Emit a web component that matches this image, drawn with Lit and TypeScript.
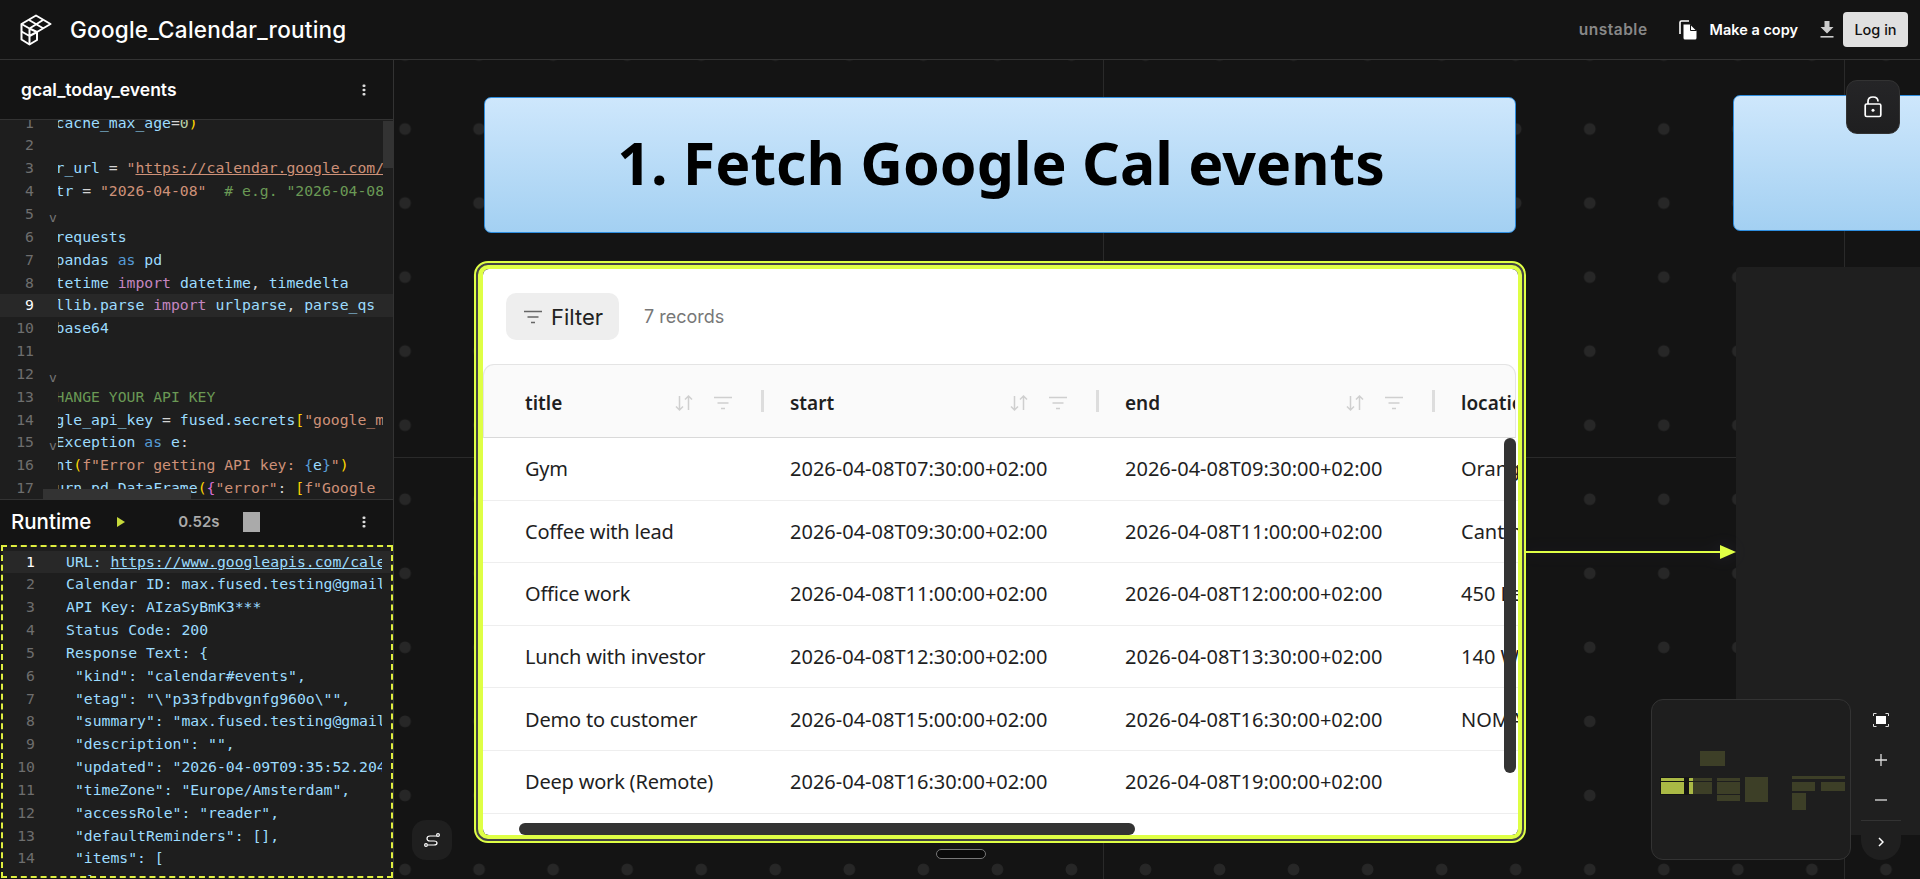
import { LitElement, css, html } from "lit";
import { customElement } from "lit/decorators.js";

const kebab = html`<svg class="kebab" width="4" height="12" viewBox="0 0 4 12" fill="currentColor">
    <rect x="0.5" y="0.5" width="3" height="2.4" rx="1"></rect>
    <rect x="0.5" y="4.8" width="3" height="2.4" rx="1"></rect>
    <rect x="0.5" y="9.1" width="3" height="2.4" rx="1"></rect>
</svg>`;

const filterIcon = (size: number) => html`<svg width=${size} height=${size} viewBox="0 0 18 18" fill="none" stroke="currentColor" stroke-width="1.5">
    <path d="M0 3.5H18M3.5 9H14.5M7 14.5H11"></path>
</svg>`;

const sortIcon = html`<svg width="18" height="18" viewBox="0 0 18 18" fill="none" stroke="currentColor" stroke-width="1.5">
    <path d="M4.5 2V16M1 12.5L4.5 16L8 12.5M13.5 16V2M10 5.5L13.5 2L17 5.5"></path>
</svg>`;

// syntax helpers for the editor lines
const v = (t: string) => html`<span class="v">${t}</span>`;
const k = (t: string) => html`<span class="k">${t}</span>`;
const b = (t: string) => html`<span class="b">${t}</span>`;
const s = (t: string) => html`<span class="s">${t}</span>`;
const c = (t: string) => html`<span class="c">${t}</span>`;
const n = (t: string) => html`<span class="n">${t}</span>`;
const y = (t: string) => html`<span class="y">${t}</span>`;

const codeLines = [
    html`${v("cache_max_age")}=${n("0")}${y(")")}`,
    html``,
    html`${v("r_url")} = ${s('"')}<span class="s u">https://calendar.google.com/calendar/ical</span>`,
    html`${v("tr")} = ${s('"2026-04-08"')}  ${c('# e.g. "2026-04-08"')}`,
    html``,
    html`${v("requests")}`,
    html`${v("pandas")} ${b("as")} ${v("pd")}`,
    html`${v("tetime")} ${k("import")} ${v("datetime")}, ${v("timedelta")}`,
    html`${v("llib.parse")} ${k("import")} ${v("urlparse")}, ${v("parse_qs")}`,
    html`${v("base64")}`,
    html``,
    html``,
    html`${c("HANGE YOUR API KEY")}`,
    html`${v("gle_api_key")} = ${v("fused.secrets")}${y("[")}${s('"google_maps"')}`,
    html`${v("Exception")} ${b("as")} ${v("e")}:`,
    html`${v("nt")}${y("(")}${s('f"Error getting API key: ')}${b("{")}${v("e")}${b("}")}${s('"')}${y(")")}`,
    html`${v("urn")} ${v("pd.DataFrame")}${y("(")}<span class="p">{</span>${s('"error"')}: ${y("[")}${s('f"Google API key"')}`,
];

const logLines: unknown[] = [
    html`URL: <span class="u">https://www.googleapis.com/calendar/v3</span>`,
    "Calendar ID: max.fused.testing@gmail.com",
    "API Key: AIzaSyBmK3***",
    "Status Code: 200",
    "Response Text: {",
    ' "kind": "calendar#events",',
    ' "etag": "\\"p33fpdbvgnfg960o\\"",',
    ' "summary": "max.fused.testing@gmail.com",',
    ' "description": "",',
    ' "updated": "2026-04-09T09:35:52.204Z",',
    ' "timeZone": "Europe/Amsterdam",',
    ' "accessRole": "reader",',
    ' "defaultReminders": [],',
    ' "items": [',
    "  {",
];

const columns = ["title", "start", "end", "location"];

const rows = [
    ["Gym", "2026-04-08T07:30:00+02:00", "2026-04-08T09:30:00+02:00", "Orange Gym"],
    ["Coffee with lead", "2026-04-08T09:30:00+02:00", "2026-04-08T11:00:00+02:00", "Cantina"],
    ["Office work", "2026-04-08T11:00:00+02:00", "2026-04-08T12:00:00+02:00", "450 Lexington"],
    ["Lunch with investor", "2026-04-08T12:30:00+02:00", "2026-04-08T13:30:00+02:00", "140 West"],
    ["Demo to customer", "2026-04-08T15:00:00+02:00", "2026-04-08T16:30:00+02:00", "NOMA"],
    ["Deep work (Remote)", "2026-04-08T16:30:00+02:00", "2026-04-08T19:00:00+02:00", ""],
    ["", "", "", ""],
];

// minimap blocks in page px: x, y, w, h, lit
const miniBlocks: [number, number, number, number, boolean][] = [
    [1700, 751, 25, 15, false],
    [1661, 778, 23, 3, true],
    [1661, 782, 23, 12, true],
    [1689, 778, 4, 3, true],
    [1689, 782, 4, 12, true],
    [1693, 778, 19, 3, false],
    [1693, 782, 19, 12, false],
    [1717, 778, 23, 3, false],
    [1717, 782, 23, 12, false],
    [1717, 795, 23, 6, false],
    [1745, 777, 23, 25, false],
    [1792, 776, 53, 3, false],
    [1792, 782, 23, 9, false],
    [1821, 782, 24, 9, false],
    [1792, 793, 14, 17, false],
];

@customElement("app-root")
export class AppRoot extends LitElement {
    static styles = css`
        :host {
            display: flex;
            flex-direction: column;
            width: 1920px;
            height: 879px;
            overflow: hidden;
            background: #141414;
            font-family: "Inter", "Noto Sans", sans-serif;
            color: #fff;
        }

        /* top bar */
        .topbar {
            flex: none;
            height: 59px;
            display: flex;
            align-items: center;
            border-bottom: 1px solid #333;
            padding-right: 12px;
        }
        .logo {
            margin-left: 14px;
            flex: none;
        }
        .project {
            margin-left: 6px;
            font-size: 22.5px;
            letter-spacing: 0.25px;
            font-weight: 500;
            flex: 1;
        }
        .unstable {
            font-size: 15.5px;
            letter-spacing: 0.5px;
            font-weight: 600;
            color: #888;
            margin-right: 31px;
        }
        .copy {
            display: flex;
            align-items: center;
            gap: 13px;
            font-size: 14.5px;
            font-weight: 600;
            margin-right: 22px;
        }
        .download {
            margin-right: 9px;
            color: #ccc;
        }
        .login {
            width: 65px;
            height: 35px;
            display: flex;
            align-items: center;
            justify-content: center;
            background: #e0e0e0;
            color: #111;
            border-radius: 4px;
            font-size: 14.5px;
            font-weight: 500;
        }

        .main {
            flex: 1;
            display: flex;
            min-height: 0;
        }

        /* left panel */
        .side {
            flex: none;
            width: 393px;
            display: flex;
            flex-direction: column;
            border-right: 1px solid #333;
            border-left: 1px solid #2a2a2a;
            margin-left: -1px;
            position: relative;
            z-index: 1;
        }
        .side-head {
            flex: none;
            height: 59px;
            display: flex;
            align-items: center;
            justify-content: space-between;
            padding: 0 27px 0 21px;
            font-size: 17.5px;
            font-weight: 600;
            border-bottom: 1px solid #333;
        }
        .kebab {
            color: #ddd;
            display: block;
        }
        .editor {
            flex: none;
            height: 379px;
            background: #1e1e1e;
            position: relative;
            overflow: hidden;
            border-bottom: 1px solid #333;
        }
        .code {
            font-family: "DejaVu Sans Mono", "Liberation Mono", monospace;
            font-size: 14.75px;
            line-height: 22.85px;
            color: #d4d4d4;
        }
        .editor .code {
            margin-top: -8.4px;
        }
        .line {
            display: flex;
            height: 22.85px;
            white-space: pre;
        }
        .line.active {
            background: #282828;
        }
        .num {
            flex: none;
            width: 34px;
            text-align: right;
            color: #6e6e6e;
        }
        .active .num {
            color: #fff;
        }
        .fold {
            flex: none;
            width: 24px;
            box-sizing: border-box;
            padding-left: 15px;
            color: #777;
            font-size: 13px;
            line-height: 30px;
        }
        .text {
            flex: none;
            width: 325px;
            overflow: hidden;
        }
        .clipfirst {
            margin-left: -2.5px;
        }
        .v {
            color: #9cdcfe;
        }
        .k {
            color: #c586c0;
        }
        .b {
            color: #569cd6;
        }
        .s {
            color: #ce9178;
        }
        .c {
            color: #6a9955;
        }
        .n {
            color: #b5cea8;
        }
        .y {
            color: #ffd700;
        }
        .p {
            color: #da70d6;
        }
        .u {
            text-decoration: underline;
        }
        .thumb {
            position: absolute;
            background: #333;
        }
        .thumb.vert {
            right: 0;
            top: 1px;
            width: 10px;
            height: 47px;
        }
        .thumb.horiz {
            left: 43px;
            bottom: 0;
            width: 148px;
            height: 10px;
        }

        .runtime {
            flex: none;
            height: 45px;
            box-sizing: border-box;
            display: flex;
            align-items: center;
            padding: 0 27px 2px 11px;
            font-size: 20.5px;
            font-weight: 500;
        }
        .play {
            margin-left: 26px;
            color: #c6d93b;
        }
        .time {
            margin-left: 53px;
            font-size: 15px;
            font-weight: 600;
            color: #aaa;
        }
        .stop {
            margin-left: 24px;
            width: 17px;
            height: 20px;
            background: #aaa;
        }
        .spacer {
            flex: 1;
        }
        .log {
            flex: none;
            background: #1e1e1e;
            border: 2px dashed #dfee3f;
            overflow: hidden;
            box-sizing: border-box;
            margin-left: 1px;
            height: 333px;
        }
        .log .code {
            margin-left: -2px;
            margin-top: 3.5px;
            color: #9cdcfe;
        }
        .log .fold {
            width: 31px;
        }
        .log .text {
            width: 316px;
        }

        /* canvas */
        .canvas {
            flex: 1;
            margin-left: -1px;
            position: relative;
            overflow: hidden;
            background-color: #141414;
            background-image: linear-gradient(#2a2a2a, #2a2a2a), linear-gradient(#2a2a2a, #2a2a2a),
                radial-gradient(circle at center, #272727 5.5px, transparent 6.2px);
            background-size: 1px 100%, 100% 1px, 74.05px 74.05px;
            background-repeat: no-repeat, no-repeat, repeat;
            background-position: 710px 0, 0 397px, -25px 32px;
        }
        .vline2 {
            position: absolute;
            left: 1451px;
            top: 0;
            bottom: 0;
            width: 1px;
            background: #2a2a2a;
        }
        .banner {
            position: absolute;
            box-sizing: border-box;
            border: 1px solid #2e8ee0;
            border-radius: 7px;
            background: linear-gradient(#cee7fc, #a3d0f2);
            display: flex;
            align-items: center;
            justify-content: center;
            padding: 0 0 6px 2px;
            color: #000;
            font-family: "Noto Sans", sans-serif;
            font-weight: 700;
            font-size: 59px;
        }
        .banner.first {
            left: 91px;
            top: 37px;
            width: 1032px;
            height: 136px;
        }
        .banner.second {
            left: 1340px;
            top: 35px;
            width: 300px;
            height: 136px;
        }
        .darknode {
            position: absolute;
            left: 1343px;
            top: 207px;
            width: 300px;
            height: 568px;
            background: #1f1f1f;
            border-radius: 4px 0 0 0;
        }
        .wire {
            position: absolute;
            left: 1128px;
            top: 482px;
            filter: drop-shadow(0 0 8px rgba(150, 140, 255, 0.12));
        }

        /* table node */
        .node {
            position: absolute;
            left: 81px;
            top: 201px;
            width: 1052px;
            height: 582px;
            box-sizing: border-box;
            border: 2px solid #dfff45;
            border-radius: 14px;
            padding: 2px;
            background: #444;
        }
        .node-inner {
            height: 100%;
            box-sizing: border-box;
            border: 4px solid #dfff45;
            border-left-width: 5px;
            border-radius: 10px;
            overflow: hidden;
        }
        .panel {
            position: relative;
            height: 100%;
            background: #fff;
            border-radius: 6px;
            overflow: hidden;
            color: #1f1f1f;
            font-family: "Noto Sans", sans-serif;
        }
        .toolbar {
            height: 95px;
            display: flex;
            align-items: center;
            gap: 25px;
            padding: 0 0 0 23px;
            box-sizing: border-box;
            font-family: "Inter", sans-serif;
        }
        .filter {
            width: 113px;
            height: 47px;
            box-sizing: border-box;
            padding-left: 18px;
            display: flex;
            align-items: center;
            gap: 9px;
            background: #eee;
            border-radius: 10px;
            font-size: 22px;
            color: #222;
        }
        .filter svg {
            color: #666;
        }
        .records {
            font-size: 18px;
            color: #777;
        }
        .table {
            width: 1262px;
        }
        .thead,
        .trow {
            display: grid;
            grid-template-columns: 291px 335px 336px 300px;
        }
        .thead {
            width: 1033px;
            height: 74px;
            box-sizing: border-box;
            background: #fafafa;
            border: 1px solid #e4e4e4;
            border-bottom-color: #d9d9d9;
            border-radius: 11px 11px 0 0;
            overflow: hidden;
            grid-template-columns: 290px 335px 336px 71px;
        }
        .th {
            display: flex;
            align-items: center;
            padding-left: 16px;
            padding-top: 4px;
            font-size: 19px;
            font-weight: 600;
            color: #1f1f1f;
            overflow: hidden;
            white-space: nowrap;
        }
        .th:first-child {
            padding-left: 41px;
        }
        .th .name {
            flex: 1;
        }
        .th svg {
            flex: none;
            color: #cfcfcf;
            display: block;
        }
        .th .second {
            margin-left: 21px;
        }
        .sep {
            flex: none;
            width: 3px;
            height: 22px;
            margin: 0 10px 4px 29px;
            background: #ddd;
        }
        .trow {
            height: 62.6px;
            box-sizing: border-box;
            border-bottom: 1px solid #eee;
        }
        .td {
            display: flex;
            align-items: center;
            padding-left: 16px;
            font-size: 20px;
            white-space: nowrap;
            overflow: hidden;
        }
        .td:first-child {
            padding-left: 42px;
            letter-spacing: -0.2px;
        }
        .bar {
            position: absolute;
            background: #333;
            border-radius: 6px;
        }
        .bar.y {
            right: 2px;
            top: 169px;
            width: 12px;
            height: 335px;
        }
        .bar.x {
            left: 36px;
            bottom: 0;
            width: 616px;
            height: 12px;
        }
        .handle {
            position: absolute;
            left: 543px;
            top: 789px;
            width: 50px;
            height: 10px;
            box-sizing: border-box;
            background: #0a0a0a;
            border: 1px solid #777;
            border-radius: 5px;
        }

        /* floating controls */
        .lock {
            position: absolute;
            left: 1453px;
            top: 20px;
            width: 54px;
            height: 54px;
            box-sizing: border-box;
            display: flex;
            align-items: center;
            justify-content: center;
            background: linear-gradient(#252527, #1f1f20);
            border: 1px solid #333;
            border-radius: 11px;
        }
        .route {
            position: absolute;
            left: 19px;
            top: 760px;
            width: 40px;
            height: 40px;
            display: flex;
            align-items: center;
            justify-content: center;
            background: #1f1f1f;
            border-radius: 14px;
        }
        .minimap {
            position: absolute;
            left: 1258px;
            top: 639px;
            width: 200px;
            height: 161px;
            box-sizing: border-box;
            background: #1e1e1e;
            border: 1px solid #333;
            border-radius: 12px;
            overflow: hidden;
        }
        .mini {
            position: absolute;
            background: #3d3f27;
        }
        .mini.lit {
            background: #aab945;
        }
        .view {
            position: absolute;
            left: 8px;
            top: 77px;
            width: 27px;
            height: 18px;
            background: #141414;
        }
        .view.gap {
            left: 33px;
            width: 5px;
        }
        .controls {
            position: absolute;
            left: 1468px;
            top: 640px;
            width: 40px;
            height: 160px;
            display: flex;
            flex-direction: column;
            background: #1f1f1f;
            border-radius: 0 0 20px 20px;
        }
        .ctrl {
            height: 40px;
            display: flex;
            align-items: center;
            justify-content: center;
            box-sizing: border-box;
        }
        .ctrl.more {
            border-top: 1px solid #333;
            height: 40px;
            padding-top: 2px;
        }
    `;

    render() {
        return html`
            <div class="topbar">
                <svg class="logo" width="50" height="42" viewBox="14 8 50 42" fill="none" stroke="#fff" stroke-width="2" stroke-linejoin="round">
                    <path d="M21.5 23L36 14.5L50.5 23L37 31V39L29.5 43.5L21.5 38.5Z"></path>
                    <path d="M21.5 23L29.5 27.5V43.5M29.5 27.5L37 31M29.5 27.5L43 19M29 19L43.5 27.5M21.5 30.5L29.5 35L37 31"></path>
                </svg>
                <div class="project">Google_Calendar_routing</div>
                <div class="unstable">unstable</div>
                <div class="copy">
                    <svg width="18" height="20" viewBox="0 0 18 20" fill="none">
                        <path d="M1 14V2.5Q1 1 2.5 1H10" stroke="#fff" stroke-width="1.6"></path>
                        <path d="M4.5 4.5H11L17.5 11V18Q17.5 19.5 16 19.5H6Q4.5 19.5 4.5 18Z" fill="#fff"></path>
                        <path d="M11.5 5V10.5H17" stroke="#141414" stroke-width="1"></path>
                    </svg>
                    <span>Make a copy</span>
                </div>
                <svg class="download" width="14" height="18" viewBox="0 0 14 18" fill="currentColor">
                    <path d="M4.5 0H9.5V6H13.5L7 12.5L0.5 6H4.5Z"></path>
                    <rect x="0.5" y="15" width="13" height="1.6"></rect>
                </svg>
                <div class="login">Log in</div>
            </div>
            <div class="main">
                <div class="side">
                    <div class="side-head"><span>gcal_today_events</span>${kebab}</div>
                    <div class="editor">
                        <div class="code">
                            ${codeLines.map((l, i) => html`<div class="line ${i === 8 ? "active" : ""}"><span class="num">${i + 1}</span><span class="fold">${[4, 11, 14].includes(i) ? "v" : ""}</span><span class="text"><div class="clipfirst">${l}</div></span></div>`)}
                        </div>
                        <div class="thumb vert"></div>
                        <div class="thumb horiz"></div>
                    </div>
                    <div class="runtime">
                        <span>Runtime</span>
                        <svg class="play" width="8" height="10" viewBox="0 0 8 10" fill="currentColor"><path d="M0 0L8 5L0 10Z"></path></svg>
                        <span class="time">0.52s</span>
                        <div class="stop"></div>
                        <div class="spacer"></div>
                        ${kebab}
                    </div>
                    <div class="log">
                        <div class="code">
                            ${logLines.map((l, i) => html`<div class="line ${i === 0 ? "active" : ""}"><span class="num">${i + 1}</span><span class="fold"></span><span class="text">${l}</span></div>`)}
                        </div>
                    </div>
                </div>
                <div class="canvas">
                    <div class="vline2"></div>
                    <div class="banner first">1. Fetch Google Cal events</div>
                    <div class="banner second"></div>
                    <div class="darknode"></div>
                    <svg class="wire" width="216" height="20" viewBox="0 0 216 20" fill="#dfff45">
                        <rect x="0" y="9" width="200" height="2"></rect>
                        <path d="M199 3L215 10L199 17Z"></path>
                    </svg>
                    <div class="node">
                        <div class="node-inner">
                            <div class="panel">
                                <div class="toolbar">
                                    <div class="filter">${filterIcon(18)}<span>Filter</span></div>
                                    <span class="records">7 records</span>
                                </div>
                                <div class="table">
                                    <div class="thead">
                                        ${columns.map(
                                            (col) => html`<div class="th">
                                                <span class="name">${col}</span>
                                                ${col === "location" ? "" : html`${sortIcon}<span class="second">${filterIcon(18)}</span><div class="sep"></div>`}
                                            </div>`,
                                        )}
                                    </div>
                                    ${rows.map((r) => html`<div class="trow">${r.map((cell) => html`<div class="td">${cell}</div>`)}</div>`)}
                                </div>
                                <div class="bar y"></div>
                                <div class="bar x"></div>
                            </div>
                        </div>
                    </div>
                    <div class="handle"></div>
                    <div class="lock">
                        <svg width="18" height="22" viewBox="0 0 18 22" fill="none" stroke="#fff" stroke-width="1.7">
                            <path d="M4 8V5.5Q4 1 9 1Q14 1 14 5.5"></path>
                            <rect x="1.2" y="8" width="15.6" height="12.5" rx="1.5"></rect>
                            <circle cx="9" cy="14.2" r="1.5" fill="#fff" stroke="none"></circle>
                        </svg>
                    </div>
                    <div class="route">
                        <svg width="16" height="14" viewBox="0 0 16 14" fill="none" stroke="#fff" stroke-width="1.2">
                            <path d="M13 3H6Q3 3 3 5.5Q3 8 6 8H10Q13 8 13 10Q13 12 10 12H4"></path>
                            <circle cx="14" cy="2" r="1.4" fill="#1f1f1f"></circle>
                            <circle cx="2" cy="12" r="1.4" fill="#1f1f1f"></circle>
                        </svg>
                    </div>
                    <div class="minimap">
                        <div class="view"></div>
                        <div class="view gap"></div>
                        ${miniBlocks.map(
                            ([x, yy, w, h, lit]) =>
                                html`<div class="mini ${lit ? "lit" : ""}" style="left:${x - 1652}px;top:${yy - 700}px;width:${w}px;height:${h}px"></div>`,
                        )}
                    </div>
                    <div class="controls">
                        <div class="ctrl">
                            <svg width="16" height="14" viewBox="0 0 16 14" fill="none" stroke="#ddd" stroke-width="1">
                                <path d="M0.5 3V0.5H3.5M12.5 0.5H15.5V3M15.5 11V13.5H12.5M3.5 13.5H0.5V11"></path>
                                <rect x="3" y="3" width="10" height="8" fill="#fff" stroke="none"></rect>
                            </svg>
                        </div>
                        <div class="ctrl">
                            <svg width="12" height="12" viewBox="0 0 12 12" stroke="#ddd" stroke-width="1.3"><path d="M0 6H12M6 0V12"></path></svg>
                        </div>
                        <div class="ctrl">
                            <svg width="12" height="12" viewBox="0 0 12 12" stroke="#ddd" stroke-width="1.3"><path d="M0 6H12"></path></svg>
                        </div>
                        <div class="ctrl more">
                            <svg width="6" height="10" viewBox="0 0 6 10" fill="none" stroke="#fff" stroke-width="1.5"><path d="M1 1L5 5L1 9"></path></svg>
                        </div>
                    </div>
                </div>
            </div>
        `;
    }
}
